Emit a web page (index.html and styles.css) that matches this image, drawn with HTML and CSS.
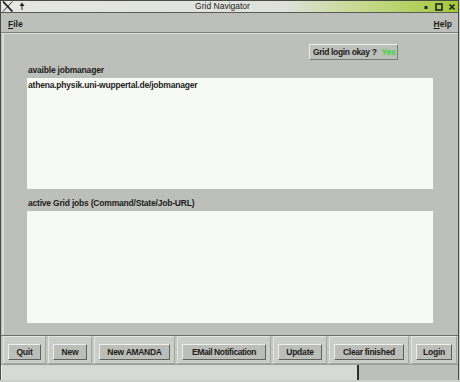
FILE: index.html
```html
<!DOCTYPE html>
<html>
<head>
<meta charset="utf-8">
<link rel="stylesheet" href="styles.css">
</head>
<body>
<div class="window">
  <div class="titlebar">
    <div class="tb-left">
      <svg class="xlogo" width="12" height="11" viewBox="0 0 12 11"><path d="M1 0.5 L10.5 10.5" stroke="#222" stroke-width="1.8" fill="none"/><path d="M10.5 0.5 L1 10.5" stroke="#222" stroke-width="0.9" fill="none"/></svg>
      <svg class="pin" width="6" height="9" viewBox="0 0 6 9"><path d="M3 0.5 L5.5 4 L0.5 4 Z" fill="#222"/><path d="M3 4 L3 8" stroke="#222" stroke-width="1"/></svg>
    </div>
    <div class="title">Grid Navigator</div>
    <div class="tb-right">
      <svg width="8" height="8" viewBox="0 0 8 8"><rect x="2.5" y="3" width="3" height="3" fill="#222"/></svg>
      <svg width="8" height="8" viewBox="0 0 8 8"><rect x="1" y="1" width="6" height="6" fill="none" stroke="#222" stroke-width="1.6"/></svg>
      <svg width="8" height="8" viewBox="0 0 8 8"><path d="M1.5 1.5 L6.5 6.5 M6.5 1.5 L1.5 6.5" stroke="#222" stroke-width="1.7"/></svg>
    </div>
  </div>
  <div class="menubar">
    <span class="menu"><u>F</u>ile</span>
    <span class="menu"><u>H</u>elp</span>
  </div>
  <div class="main">
    <div class="login-row">
      <div class="login-box"><span class="login-q">Grid login okay ?</span><span class="yes">Yes</span></div>
    </div>
    <div class="label label-first">avaible jobmanager</div>
    <div class="textarea ta1"><div class="line">athena.physik.uni-wuppertal.de/jobmanager</div></div>
    <div class="label label-second">active Grid jobs (Command/State/Job-URL)</div>
    <div class="textarea ta2"></div>
  </div>
  <div class="buttonbar">
    <div class="cell"><span class="btn b-quit">Quit</span></div>
    <div class="cell"><span class="btn b-new">New</span></div>
    <div class="cell"><span class="btn b-amanda">New AMANDA</span></div>
    <div class="cell"><span class="btn b-email">EMail Notification</span></div>
    <div class="cell"><span class="btn b-update">Update</span></div>
    <div class="cell"><span class="btn b-clear">Clear finished</span></div>
    <div class="cell"><span class="btn b-login">Login</span></div>
  </div>
  <div class="statusbar">
    <div class="status-left"></div>
    <div class="status-right"></div>
  </div>
</div>
</body>
</html>
```
FILE: styles.css
```css
* { box-sizing: border-box; }
html, body { margin: 0; padding: 0; }
body {
  width: 460px;
  height: 382px;
  background: #cdd0ca;
  font-family: "Liberation Sans", Arial, sans-serif;
  color: #1c1c1c;
  overflow: hidden;
}
.window {
  width: 459px;
  height: 380px;
  border: 1px solid #4a4b48;
  background: #bdbfba;
  display: flex;
  flex-direction: column;
}
.titlebar {
  height: 12px;
  flex: none;
  display: flex;
  align-items: center;
  border-bottom: 1px solid #5a5c58;
  background: linear-gradient(90deg, #e6e7e4 0%, #dfe1da 62%, #c4d98a 80%, #a3c937 100%);
}
.tb-left {
  display: flex;
  align-items: center;
  gap: 5px;
  padding-left: 1px;
  width: 120px;
}
.title {
  flex: 1;
  text-align: center;
  font-size: 8.5px;
  line-height: 11px;
  padding-right: 14px;
}
.tb-right {
  display: flex;
  align-items: center;
  gap: 5px;
  padding-right: 2px;
  width: 120px;
  justify-content: flex-end;
}
.menubar {
  height: 20px;
  flex: none;
  display: flex;
  justify-content: space-between;
  align-items: center;
  padding: 2px 6px 0 7px;
  border-bottom: 1px solid #7d7f7b;
  box-shadow: 0 1px 0 #dcded9;
  font-size: 8.5px;
  font-weight: bold;
}
.menu u { text-decoration: underline; }
.main {
  flex: none;
  height: 302px;
  padding-top: 11px;
  border-left: 2px solid #dadcd7;
  margin-left: 1px;
}
.login-row {
  display: flex;
  justify-content: flex-end;
  padding-right: 60px;
}
.login-box {
  width: 89px;
  height: 16px;
  border: 1px solid;
  border-color: #eceee9 #7a7c78 #7a7c78 #eceee9;
  font-size: 8.5px;
  font-weight: bold;
  line-height: 14px;
  padding-left: 3px;
  white-space: nowrap;
  display: flex;
  gap: 5px;
}
.login-q { letter-spacing: -0.35px; }
.yes { color: #3ad43a; letter-spacing: -0.2px; }
.label {
  font-size: 8.5px;
  font-weight: bold;
  letter-spacing: -0.2px;
  padding-left: 24px;
  line-height: 16px;
  height: 16px;
}
.label-first { margin-top: 2px; }
.label-second { margin-top: 6px; }
.textarea {
  margin-left: 23px;
  width: 406px;
  background: #f6f9f4;
}
.ta1 { height: 111px; padding: 2px 1px; }
.ta2 { height: 112px; }
.line {
  font-size: 8.5px;
  font-weight: bold;
  letter-spacing: -0.2px;
  line-height: 10px;
}
.buttonbar {
  flex: none;
  height: 29px;
  border-top: 1px solid #6d6f6b;
  display: flex;
  justify-content: space-between;
  padding: 0 1px 0 2px;
  background: #c5c8c2;
}
.cell {
  flex: none;
  height: 28px;
  padding: 7px 4px 0 4px;
  border: 1px solid;
  border-color: #e4e6e1 #a3a5a1 #a3a5a1 #e4e6e1;
  background: #cbcec8;
}
.btn {
  display: block;
  height: 16px;
  border: 1px solid;
  border-color: #eef0eb #5f615d #5f615d #eef0eb;
  background: #bcbeb9;
  font-size: 8.5px;
  font-weight: bold;
  line-height: 14px;
  white-space: nowrap;
  text-align: center;
  letter-spacing: -0.2px;
}
.b-quit { width: 33px; }
.b-new { width: 34px; }
.b-amanda { width: 71px; letter-spacing: -0.3px; }
.b-email { width: 84px; letter-spacing: -0.4px; }
.b-update { width: 44px; }
.b-clear { width: 70px; letter-spacing: -0.3px; }
.b-login { width: 36px; }
.statusbar {
  flex: none;
  height: 16px;
  display: flex;
  border-top: 1px solid #9a9c98;
}
.status-left {
  width: 356px;
  background: #d7dad4;
  border-left: 1px solid #eef0eb;
}
.status-right {
  flex: 1;
  border-left: 2px solid #2e2f2d;
  background: #bdbfba;
}
```
